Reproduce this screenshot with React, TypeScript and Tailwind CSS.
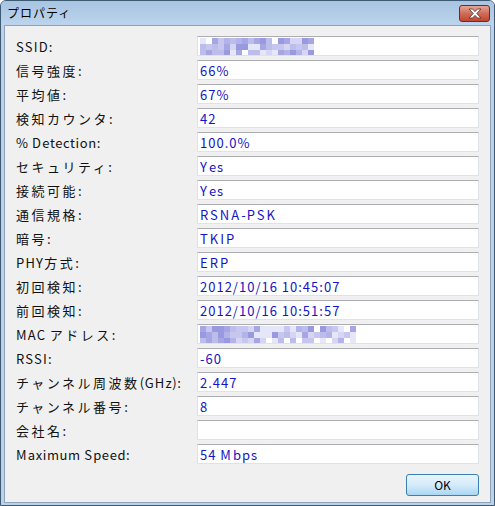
import React from "react";

const FONT = { fontFamily: '"Noto Sans CJK JP", "Liberation Sans", sans-serif' };

type Row = { label: string; value?: string; mosaic?: number };

const rows: Row[] = [
  { label: "SSID:", mosaic: 114 },
  { label: "信号強度:", value: "66%" },
  { label: "平均値:", value: "67%" },
  { label: "検知カウンタ:", value: "42" },
  { label: "% Detection:", value: "100.0%" },
  { label: "セキュリティ:", value: "Yes" },
  { label: "接続可能:", value: "Yes" },
  { label: "通信規格:", value: "RSNA-PSK" },
  { label: "暗号:", value: "TKIP" },
  { label: "PHY方式:", value: "ERP" },
  { label: "初回検知:", value: "2012/10/16 10:45:07" },
  { label: "前回検知:", value: "2012/10/16 10:51:57" },
  { label: "MAC アドレス:", mosaic: 156 },
  { label: "RSSI:", value: "-60" },
  { label: "チャンネル周波数(GHz):", value: "2.447" },
  { label: "チャンネル番号:", value: "8" },
  { label: "会社名:", value: "" },
  { label: "Maximum Speed:", value: "54 Mbps" },
];

// split text into runs so CJK and capitals get the wider spacing of the original font
function runs(text: string) {
  const out: { kind: "cjk" | "cap" | "other"; text: string }[] = [];
  for (const ch of text) {
    const kind = /[\u3000-\u9fff]/.test(ch) ? "cjk" : /[A-Z]/.test(ch) ? "cap" : "other";
    const last = out[out.length - 1];
    if (last && last.kind === kind) last.text += ch;
    else out.push({ kind, text: ch });
  }
  return out;
}

function Label({ text }: { text: string }) {
  return (
    <>
      {runs(text).map((r, i) => (
        <span
          key={i}
          className={r.kind === "cjk" ? "tracking-[2.5px]" : r.kind === "cap" ? "tracking-[1.2px]" : "tracking-[0.6px]"}
        >
          {r.text}
        </span>
      ))}
    </>
  );
}

function Value({ text }: { text: string }) {
  return (
    <>
      {runs(text).map((r, i) => (
        <span key={i} className={r.kind === "cap" ? "tracking-[2px]" : "tracking-[1px]"}>
          {r.text}
        </span>
      ))}
    </>
  );
}

// pixelated (blurred) text, like the privacy mosaic in the screenshot
function Mosaic({ width, seed }: { width: number; seed: number }) {
  const shades = ["#c6c6ef", "#b3b3e9", "#a6a6e4", "#d6d6f4", "#9999df", "#e6e6f9", "#bdbdec", "#ffffff"];
  let s = seed;
  const rnd = () => {
    s = (s * 9301 + 49297) % 233280;
    return s / 233280;
  };
  const cell = 6;
  const cols = Math.floor(width / cell);
  const rects = [];
  for (let y = 0; y < 3; y++) {
    for (let x = 0; x < cols; x++) {
      const fill = shades[Math.floor(rnd() * shades.length)];
      rects.push(<rect key={`${x}-${y}`} x={x * cell} y={y * cell} width={cell} height={cell} fill={fill} />);
    }
  }
  return (
    <svg width={cols * cell} height={17} className="block">
      {rects}
    </svg>
  );
}

function CloseButton() {
  return (
    <div className="w-[31px] h-[17px] rounded-[3px] border border-[#6b2a24] bg-gradient-to-b from-[#e6a595] via-[#cf6b58] to-[#c24530] flex items-center justify-center">
      <svg width="14" height="11" viewBox="0 0 14 11">
        <path
          d="M1 1 L4.5 1 L7 3.6 L9.5 1 L13 1 L8.8 5.5 L13 10 L9.5 10 L7 7.4 L4.5 10 L1 10 L5.2 5.5 Z"
          fill="#ffffff"
          stroke="#5a3a3a"
          strokeWidth="0.9"
          strokeLinejoin="round"
        />
      </svg>
    </div>
  );
}

export default function App() {
  return (
    <div style={FONT} className="w-[495px] h-[506px] bg-[#bcd2ea] border border-[#3e5a73] rounded-t-[6px] flex flex-col overflow-hidden">
      <div className="h-[24px] flex items-center justify-between pl-[6px] pr-[4px] bg-gradient-to-b from-[#a8c4e2] to-[#bcd4ec] shrink-0">
        <span className="text-[12px] text-black leading-none tracking-[1px]">プロパティ</span>
        <CloseButton />
      </div>
      <div className="flex-1 mx-[3px] mb-[2px] bg-[#f0f0f0] border border-[#8ea3b9] flex flex-col pt-[10px] pl-[11px] pr-[11px]">
        <div className="flex flex-col gap-[4px]">
          {rows.map((r, i) => (
            <div key={i} className="flex items-center h-[20px]">
              <span className="w-[181px] shrink-0 text-[13px] leading-none text-[#111] whitespace-nowrap">
                <Label text={r.label} />
              </span>
              <div className="flex-1 h-[20px] bg-white border border-[#dde3ea] border-t-[#abadb3] flex items-center pl-[2px]">
                {r.mosaic ? (
                  <Mosaic width={r.mosaic} seed={i * 37 + 11} />
                ) : (
                  <span className="text-[13px] leading-none text-[#1414c4] whitespace-nowrap">
                    <Value text={r.value ?? ""} />
                  </span>
                )}
              </div>
            </div>
          ))}
        </div>
        <div className="flex justify-end mt-[10px]">
          <button className="w-[73px] h-[22px] rounded-[3px] border border-[#3c7fb1] bg-gradient-to-b from-[#e9f5fd] via-[#d5ebfa] to-[#a9d7f5] text-[12px] leading-none text-black">
            OK
          </button>
        </div>
      </div>
    </div>
  );
}
